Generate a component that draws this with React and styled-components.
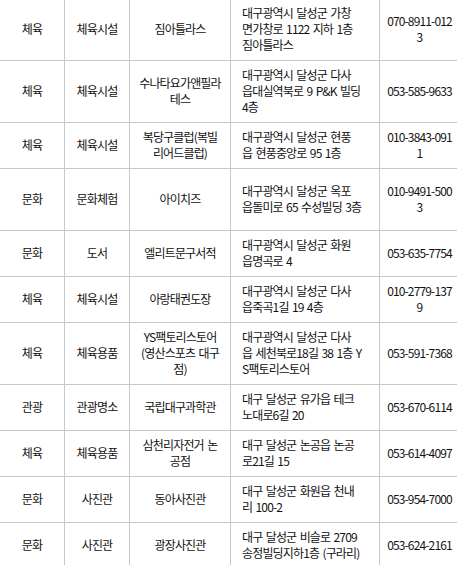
import React from "react";
import styled, { createGlobalStyle } from "styled-components";

const GlobalStyle = createGlobalStyle`
  html, body {
    margin: 0;
    padding: 0;
    background: #fff;
    overflow: hidden;
  }
  body {
    font-family: "Noto Sans CJK KR", "Noto Sans", sans-serif;
  }
`;

const Table = styled.table`
  border-collapse: collapse;
  table-layout: fixed;
  width: 460px;
  margin: -2px 0 0 -1px;
  font-size: 12px;
  line-height: 16px;
  letter-spacing: -0.85px;
  word-spacing: 1.5px;
  color: #111;
  word-break: break-all;
`;

const Col = styled.col`
  width: ${(props) => props.$width}px;
`;

const Tr = styled.tr`
  height: ${(props) => (props.$tall ? "62px" : "auto")};
`;

const Td = styled.td`
  border: 1px solid #c8c8c8;
  padding: ${(props) => (props.$left ? "6px 4px 7px 11px" : "6px 5px 7px")};
  text-align: ${(props) => (props.$left ? "left" : "center")};
  vertical-align: middle;
  white-space: ${(props) => (props.$lines ? "pre" : "normal")};
  overflow: hidden;
`;

const places = [
  ["체육", "체육시설", "짐아틀라스", "대구광역시 달성군 가창\n면가창로 1122 지하 1층\n짐아틀라스", "070-8911-0123"],
  ["체육", "체육시설", "수나타요가앤필라\n테스", "대구광역시 달성군 다사\n읍대실역북로 9 P&K 빌딩\n4층", "053-585-9633"],
  ["체육", "체육시설", "복당구클럽(복빌\n리어드클럽)", "대구광역시 달성군 현풍\n읍 현풍중앙로 95 1층", "010-3843-0911"],
  ["문화", "문화체험", "아이치즈", "대구광역시 달성군 옥포\n읍돌미로 65 수성빌딩 3층", "010-9491-5003", true],
  ["문화", "도서", "엘리트문구서적", "대구광역시 달성군 화원\n읍명곡로 4", "053-635-7754"],
  ["체육", "체육시설", "아랑태권도장", "대구광역시 달성군 다사\n읍죽곡1길 19 4층", "010-2779-1379"],
  ["체육", "체육용품", "YS팩토리스토어\n(영산스포츠 대구\n점)", "대구광역시 달성군 다사\n읍 세천북로18길 38 1층 Y\nS팩토리스토어", "053-591-7368"],
  ["관광", "관광명소", "국립대구과학관", "대구 달성군 유가읍 테크\n노대로6길 20", "053-670-6114"],
  ["체육", "체육용품", "삼천리자전거 논\n공점", "대구 달성군 논공읍 논공\n로21길 15", "053-614-4097"],
  ["문화", "사진관", "동아사진관", "대구 달성군 화원읍 천내\n리 100-2", "053-954-7000"],
  ["문화", "사진관", "광장사진관", "대구 달성군 비슬로 2709\n송정빌딩지하1층 (구라리)", "053-624-2161"],
];

const App = () => {
  return (
    <>
      <GlobalStyle />
      <Table>
        <colgroup>
          <Col $width={65} />
          <Col $width={65} />
          <Col $width={101} />
          <Col $width={149} />
          <Col $width={80} />
        </colgroup>
        <tbody>
          {places.map(([type, category, name, address, phone, tall], i) => (
            <Tr key={i} $tall={tall}>
              <Td>{type}</Td>
              <Td>{category}</Td>
              <Td $lines>{name}</Td>
              <Td $left $lines>{address}</Td>
              <Td>{phone}</Td>
            </Tr>
          ))}
        </tbody>
      </Table>
    </>
  );
};

export default App;
